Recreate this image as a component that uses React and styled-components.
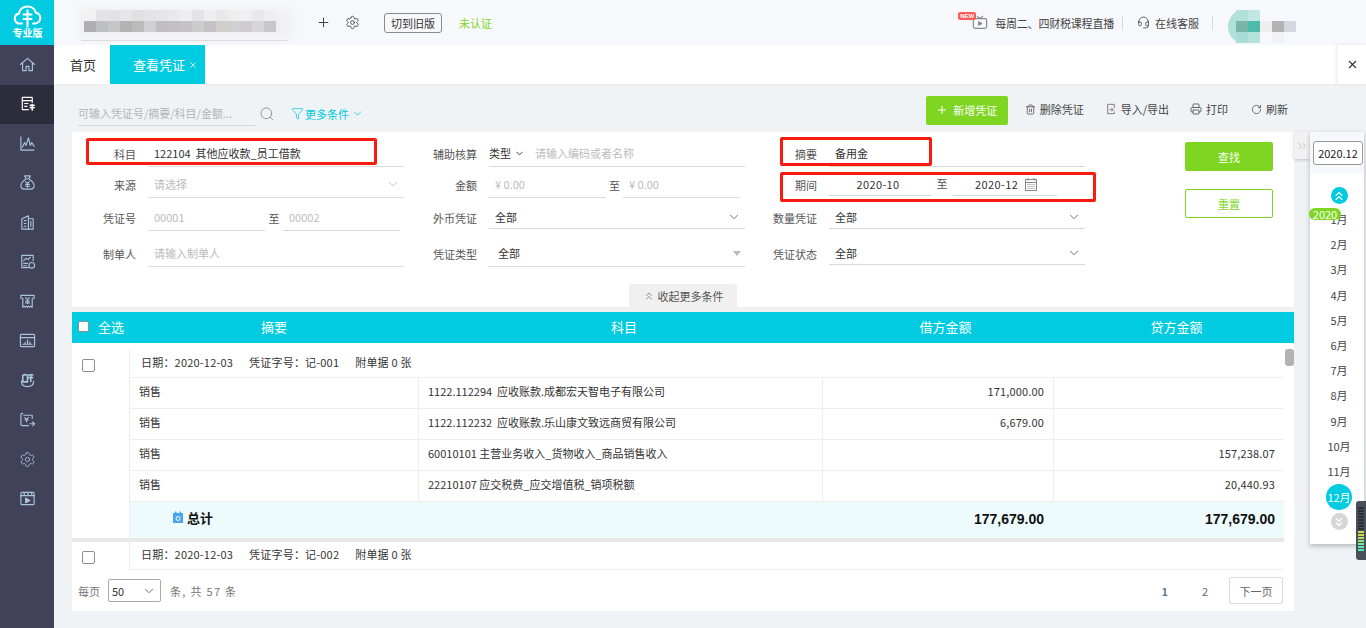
import React from 'react'
import styled, { createGlobalStyle } from 'styled-components'
import { Plus, Settings, Search, Filter, ChevronDown, ChevronsUp, ChevronsDown, ChevronsRight, X, Trash2, Printer, RotateCw, Headset } from 'lucide-react'

const GlobalStyle = createGlobalStyle`
  * { box-sizing: border-box; }
  html, body { margin: 0; padding: 0; overflow: hidden; }
  body {
    font-family: "Noto Sans CJK SC", "Liberation Sans", sans-serif;
    font-size: 11px;
    color: #333;
    background: #eff3f6;
  }
`

const CYAN = '#00cbe0'
const GREEN = '#7ed622'

const Page = styled.div`
  display: flex;
  width: 1366px;
  height: 628px;
  overflow: hidden;
`

const Sidebar = styled.nav`
  width: 54px;
  flex: none;
  background: #41425a;
`

const Logo = styled.div`
  height: 45px;
  background: ${CYAN};
  color: #fff;
  display: flex;
  flex-direction: column;
  align-items: center;
  padding: 5px 0 0 1px;
  font-size: 10px;
  font-weight: 700;
  line-height: 10px;
`

const SideItem = styled.div`
  height: 39.5px;
  padding-bottom: 1px;
  display: flex;
  align-items: center;
  justify-content: center;
  color: ${p => (p.$active ? '#fff' : '#a9c4dc')};
  background: ${p => (p.$active ? '#2b2e3a' : 'transparent')};
`

const Main = styled.div`
  flex: 1;
  min-width: 0;
  display: flex;
  flex-direction: column;
`

const TopBar = styled.header`
  height: 45px;
  flex: none;
  background: #f7f8fc;
  display: flex;
  align-items: center;
`

const Mosaic = styled.div`
  position: relative;
  display: grid;
  grid-template-columns: repeat(${p => p.$cols}, 12px);
  grid-auto-rows: ${p => p.$row}px;
  margin-left: ${p => p.$left || 0}px;
  margin-top: ${p => p.$top || 0}px;
`

const Cell = styled.i`
  display: block;
  background: ${p => p.$c};
`

const NameBlur = styled.div`
  position: relative;
  width: 222px;
  height: 36px;
  margin-left: 24px;
  display: flex;
  align-items: center;
  &::before {
    content: '';
    position: absolute;
    inset: 4px 6px 2px 2px;
    background: #f0f0f2;
    filter: blur(4px);
  }
  &::after {
    content: '';
    position: absolute;
    left: 3px;
    right: 12px;
    bottom: 0;
    height: 1px;
    background: #dcdcde;
  }
`

const TopIcon = styled.span`
  display: flex;
  margin-left: ${p => p.$left}px;
  color: #444;
`

const OldBtn = styled.button`
  margin-left: 24px;
  width: 58px;
  height: 20px;
  padding: 0;
  border: 1px solid #8a8a8a;
  border-radius: 3px;
  background: transparent;
  color: #333;
  font: inherit;
  line-height: 18px;
`

const Unverified = styled.span`
  margin-left: 17px;
  color: ${GREEN};
`

const TopRight = styled.div`
  margin-left: auto;
  display: flex;
  align-items: center;
  padding-right: 70px;
  color: #444;
`

const LiveIcon = styled.span`
  position: relative;
  display: flex;
  margin-right: 7px;
  color: #8a8a8a;
`

const NewBadge = styled.b`
  position: absolute;
  left: -14px;
  top: -3px;
  width: 18px;
  height: 8px;
  border-radius: 2px;
  background: #fb5a5a;
  color: #fff;
  font: 700 6px/8px "Liberation Sans", sans-serif;
  text-align: center;
`

const LiveText = styled.span`
  letter-spacing: -0.2px;
`

const ServiceText = styled.span`
  margin-left: 5px;
`

const VSep = styled.span`
  width: 1px;
  height: 14px;
  background: #d8d8d8;
  margin: 0 ${p => p.$right}px 0 ${p => p.$left}px;
`

const UserBlur = styled.div`
  position: relative;
  width: 68px;
  height: 33px;
  margin-top: 8px;
`

const UserBlob = styled.span`
  position: absolute;
  left: 0;
  top: 0;
  width: 30px;
  height: 33px;
  border-radius: 50% 0 0 50%;
  background: #b2e1da;
`

const TabBar = styled.div`
  height: 40px;
  flex: none;
  background: #fff;
  display: flex;
  border-bottom: 1px solid #eceef0;
`

const Tab = styled.div`
  width: ${p => p.$w}px;
  padding-left: ${p => p.$pad}px;
  display: flex;
  align-items: center;
  font-size: 13px;
  background: ${p => (p.$on ? CYAN : '#fff')};
  color: ${p => (p.$on ? '#fff' : '#333')};
  svg { margin-left: 3px; }
`

const TabClose = styled.div`
  margin-left: auto;
  width: 28px;
  display: flex;
  align-items: center;
  justify-content: center;
  box-shadow: -2px 0 4px rgba(0, 0, 0, 0.08);
  color: #333;
`

const Tools = styled.div`
  height: 47px;
  flex: none;
  display: flex;
  align-items: center;
  padding: 0 78px 0 24px;
`

const SearchBox = styled.div`
  width: 177px;
  height: 25px;
  margin-top: 10px;
  border-bottom: 1px solid #d5d8dc;
  color: #b5b5b5;
  line-height: 25px;
  white-space: nowrap;
`

const SearchBtn = styled.span`
  display: flex;
  margin: 10px 0 0 4px;
  color: #8a8f94;
`

const MoreLink = styled.span`
  display: flex;
  align-items: center;
  margin: 10px 0 0 16px;
  color: ${CYAN};
  svg:first-child { margin-right: 1px; }
  svg:last-child { margin-left: 2px; }
`

const ToolRight = styled.div`
  margin-left: auto;
  display: flex;
  align-items: center;
  margin-top: 3px;
`

const AddBtn = styled.button`
  width: 82px;
  height: 29px;
  border: 0;
  border-radius: 2px;
  background: ${GREEN};
  color: #fff;
  font: inherit;
  display: flex;
  align-items: center;
  justify-content: center;
  gap: 5px;
  padding: 0 0 1px;
`

const ToolLink = styled.span`
  display: flex;
  align-items: center;
  gap: 4px;
  margin-left: ${p => p.$left}px;
  padding-bottom: 2px;
  color: #444;
  svg { color: #666; }
`

const Body = styled.div`
  flex: 1;
  display: flex;
  min-height: 0;
  padding-left: 18px;
`

const Content = styled.section`
  width: 1222px;
  flex: none;
  height: 479px;
  background: #fff;
  display: flex;
  flex-direction: column;
`

const FormCard = styled.div`
  position: relative;
  height: 175px;
  flex: none;
  display: grid;
  grid-template-columns: 332px 341px 340px 188px;
  grid-template-rows: 35px 31px 33px 36px;
  align-items: end;
`

const Field = styled.div`
  display: flex;
  align-items: flex-end;
  margin-bottom: ${p => (p.$lift ? 2 : 0)}px;
`

const Label = styled.label`
  width: ${p => p.$w || 64}px;
  flex: none;
  height: ${p => p.$h || 26}px;
  line-height: ${p => p.$h || 26}px;
  text-align: right;
  margin-right: 12px;
  color: #555;
`

const Control = styled.div`
  flex: ${p => (p.$w ? 'none' : 1)};
  width: ${p => (p.$w ? `${p.$w}px` : 'auto')};
  height: ${p => p.$h || 27}px;
  display: flex;
  align-items: center;
  justify-content: ${p => p.$justify || 'flex-start'};
  padding-left: ${p => p.$pad ?? 6}px;
  padding-right: 4px;
  border-bottom: 1px solid #d9d9d9;
  color: ${p => (p.$muted ? '#bbb' : '#333')};
  white-space: pre;
  > svg { margin-left: auto; color: ${p => p.$arrow || '#555'}; flex: none; }
`

const ToWord = styled.span`
  flex: none;
  width: ${p => p.$w}px;
  height: 26px;
  line-height: 26px;
  text-align: center;
  color: #555;
`

const TypePick = styled.span`
  display: flex;
  align-items: center;
  color: #333;
  margin-right: 10px;
  svg { margin-left: 3px; }
`

const Hint = styled.span`
  color: #bbb;
`

const DateText = styled.span`
  letter-spacing: 0.4px;
`

const CalendarIcon = styled.span`
  display: flex;
  margin-left: 7px;
  color: #888;
`

const ButtonCol = styled.div`
  grid-column: 4;
  grid-row: 1 / 5;
  align-self: start;
  padding: 10px 0 0 100px;
  display: flex;
  flex-direction: column;
  gap: 18px;
`

const FindBtn = styled.button`
  width: 88px;
  height: 29px;
  border-radius: 2px;
  border: 1px solid ${GREEN};
  background: ${p => (p.$ghost ? '#fff' : GREEN)};
  color: ${p => (p.$ghost ? GREEN : '#fff')};
  font: inherit;
  padding: 0;
`

const Collapse = styled.div`
  position: absolute;
  left: 557px;
  bottom: 0;
  width: 108px;
  height: 23px;
  border-radius: 3px 3px 0 0;
  background: #f0f0f0;
  color: #555;
  display: flex;
  align-items: center;
  justify-content: center;
  gap: 3px;
`

const RedBox = styled.div`
  position: absolute;
  left: ${p => p.$x}px;
  top: ${p => p.$y}px;
  width: ${p => p.$w}px;
  height: ${p => p.$h}px;
  border: 3px solid #fb1a10;
  border-radius: 2px;
  pointer-events: none;
`

const Strip = styled.div`
  height: 5px;
  flex: none;
  background: #f0f0f0;
`

const TableHead = styled.div`
  height: 31px;
  flex: none;
  padding-bottom: 2px;
  background: ${CYAN};
  color: #fff;
  font-size: 13px;
  display: grid;
  grid-template-columns: 58px 288px 412px 231px 231px;
  align-items: center;
  text-align: center;
`

const SelectAll = styled.label`
  display: flex;
  align-items: center;
  gap: 9px;
  padding-left: 6px;
  white-space: nowrap;
`

const Check = styled.input.attrs({ type: 'checkbox' })`
  appearance: none;
  margin: 0;
  flex: none;
  width: ${p => p.$size}px;
  height: ${p => p.$size}px;
  background: #fff;
  border: 1px solid #8f8f8f;
  border-radius: 2px;
`

const TableBody = styled.div`
  height: 228px;
  flex: none;
  display: flex;
  overflow: hidden;
  padding-top: 7px;
`

const VoucherList = styled.div`
  width: 1212px;
  flex: none;
`

const Voucher = styled.div`
  display: flex;
  border-bottom: ${p => (p.$last ? 0 : '4px solid #e8e8e8')};
`

const CheckCol = styled.div`
  width: 57px;
  flex: none;
  padding: 9px 0 0 10px;
`

const VoucherBody = styled.div`
  flex: 1;
  border-left: 1px solid #eee;
`

const VoucherInfo = styled.div`
  height: 28px;
  display: flex;
  align-items: center;
  padding: 0 0 4px 11px;
  gap: 16px;
  border-bottom: 1px solid #eee;
  letter-spacing: 0.2px;
`

const Row = styled.div`
  display: grid;
  grid-template-columns: 289px 404px 231px 230px;
  height: ${p => (p.$total ? 36 : 31)}px;
  align-items: stretch;
  border-bottom: ${p => (p.$total ? 0 : '1px solid #eee')};
  background: ${p => (p.$total ? '#edfbfd' : '#fff')};
`

const Td = styled.div`
  display: flex;
  align-items: center;
  justify-content: ${p => (p.$right ? 'flex-end' : 'flex-start')};
  padding: 0 9px 4px;
  border-right: ${p => (p.$noBorder ? 0 : '1px solid #eee')};
  white-space: pre;
  letter-spacing: ${p => (p.$right ? '0.15px' : 0)};
`

const TotalLabel = styled.div`
  display: flex;
  align-items: center;
  gap: 3px;
  padding: 0 0 6px 42px;
  font-size: 13px;
  font-weight: 700;
  color: #111;
`

const TotalNum = styled(Td)`
  font: 700 14px "Liberation Sans", sans-serif;
  letter-spacing: 0;
  padding-bottom: 2px;
  padding-right: ${p => (p.$debit ? 10 : 9)}px;
  color: #111;
`

const ScrollTrack = styled.div`
  width: 10px;
  flex: none;
  padding: 0 0 0 1px;
`

const ScrollThumb = styled.div`
  height: 17px;
  margin-top: -1px;
  border-radius: 3px;
  background: #b5b2b2;
`

const Footer = styled.div`
  height: 40px;
  flex: none;
  display: flex;
  align-items: center;
  padding: 0 11px 1px 6px;
  color: #777;
`

const PageSize = styled.div`
  width: 53px;
  height: 23px;
  margin: 0 9px 0 8px;
  padding: 0 4px 0 3px;
  border: 1px solid #aaa;
  border-radius: 2px;
  color: #333;
  display: flex;
  align-items: center;
  justify-content: space-between;
`

const CountText = styled.span`
  letter-spacing: 1.3px;
`

const Pager = styled.div`
  margin-left: auto;
  display: flex;
  align-items: center;
  color: #5a6a7a;
`

const PageNum = styled.span`
  margin-right: ${p => p.$right}px;
  font-weight: ${p => (p.$on ? 700 : 400)};
  color: ${p => (p.$on ? '#5b7a8c' : '#5a6a7a')};
`

const NextBtn = styled.button`
  width: 54px;
  height: 27px;
  border: 1px solid #ddd;
  border-radius: 2px;
  background: #fff;
  color: #666;
  font: inherit;
  padding: 0;
`

const Rail = styled.aside`
  flex: none;
  width: 72px;
  height: 412px;
  position: relative;
  display: flex;
`

const RailToggle = styled.div`
  width: 16px;
  height: 27px;
  flex: none;
  background: #f2f2f2;
  box-shadow: 0 1px 3px rgba(0, 0, 0, 0.2);
  color: #b4b4b4;
  display: flex;
  align-items: center;
  justify-content: center;
`

const MonthPanel = styled.div`
  width: 54px;
  background: #fff;
  box-shadow: 0 2px 5px rgba(0, 0, 0, 0.25);
  display: flex;
  flex-direction: column;
`

const PeriodWrap = styled.div`
  height: 42px;
  flex: none;
  background: #f7f8fc;
  padding: 9px 0 0 3px;
`

const PeriodBox = styled.div`
  width: 50px;
  height: 24px;
  line-height: 22px;
  text-align: center;
  background: #fff;
  border: 1px solid #999;
  border-radius: 3px;
  color: #222;
`

const MonthColumn = styled.div`
  display: flex;
  flex-direction: column;
  align-items: center;
  padding-left: 4px;
`

const RoundBtn = styled.span`
  width: 17px;
  height: 17px;
  margin-top: ${p => p.$top}px;
  border-radius: 50%;
  background: ${p => (p.$grey ? '#d6d6d6' : CYAN)};
  color: #fff;
  display: flex;
  align-items: center;
  justify-content: center;
  flex: none;
`

const YearBadge = styled.span`
  position: absolute;
  left: 15px;
  top: 76px;
  width: 32px;
  height: 12px;
  border-radius: 6px;
  background: ${GREEN};
  color: #fff;
  line-height: 12px;
  text-align: center;
`

const MonthList = styled.div`
  margin-top: 3px;
  display: flex;
  flex-direction: column;
  align-items: center;
`

const Month = styled.span`
  height: 25.2px;
  line-height: 25.2px;
  text-align: center;
  color: #444;
`

const MonthOn = styled.span`
  width: 26px;
  height: 26px;
  line-height: 26px;
  border-radius: 50%;
  background: ${CYAN};
  color: #fff;
  text-align: center;
  white-space: nowrap;
`

const MeterWidget = styled.div`
  position: absolute;
  right: 0;
  top: 501px;
  width: 10px;
  height: 59px;
  border-radius: 3px 0 0 3px;
  background: #4b5058;
  padding: 6px 2px 2px;
  display: flex;
  flex-direction: column;
  gap: 1px;
`

const MeterBar = styled.i`
  display: block;
  height: 2px;
  flex: none;
  background: ${p => p.$c};
`

const Glyph = ({ size = 17, width = 1.2, children }) => (
  <svg width={size} height={size} viewBox="0 0 18 18" fill="none" stroke="currentColor" strokeWidth={width} strokeLinecap="round" strokeLinejoin="round">
    {children}
  </svg>
)

const LogoCloud = () => (
  <svg width="29" height="23" viewBox="0 0 29 23" fill="none" stroke="#fff" strokeWidth="2.1" strokeLinecap="round" strokeLinejoin="round">
    <path d="M9 18.500H6.500a5 5 0 0 1-.6-9.900C6.800 4.300 10.300 1.500 14.500 1.500c3.900 0 7.200 2.400 8.300 6.100a5.500 5.500 0 0 1-.6 10.900H20" />
    <path d="M14.500 5.500v16" />
    <path d="M10.500 9.500h8M10.500 14h8" />
  </svg>
)

const CalendarGlyph = () => (
  <svg width="12" height="13" viewBox="0 0 12 13" fill="none" stroke="currentColor" strokeWidth="1">
    <rect x="0.500" y="1.500" width="11" height="11" />
    <path d="M0.500 4.500h11M3 0v2.500M9 0v2.500" />
    <path d="M2.500 6.500h7M2.500 8.500h7M2.500 10.500h7" strokeDasharray="1 1" />
  </svg>
)

const sideIcons = [
  <Glyph><path d="M1.500 9L9 2.500 16.500 9" /><path d="M3.800 7.500v8h3.700v-4.500h3v4.500h3.700v-8" /></Glyph>,
  <Glyph><path d="M14 8V2.500H3.500v13H10" /><path d="M3.500 6h10.500M6 9h3.500M6 12h2.500" /><path d="M12 11h4M12 13.500h4M14 10v6" strokeWidth="1.700" /></Glyph>,
  <Glyph><path d="M2 2v14h14" /><path d="M3.500 13l2.500-5 1.500 3L10 3l2 8 1.500-3 2.500 4" /></Glyph>,
  <Glyph><path d="M6 2h6l-1.500 3h-3z" /><path d="M7 5.500C4 7.500 2 10 2 12.500 2 15 3.500 16 6 16h6c2.500 0 4-1 4-3.500 0-2.500-2-5-5-7" /><path d="M7 8l2 2 2-2M9 10v4M7 11h4M7 13h4" /></Glyph>,
  <Glyph><path d="M3 5l7-3v14H3z" /><path d="M10 5h5v11h-5" /><path d="M5.500 7h2M5.500 10h2M5.500 13h2M12.500 8v5" /></Glyph>,
  <Glyph><path d="M15 8V2.500H3v13h7" /><path d="M5 11h4M5 13.500h3M5 8l2.500-2.500 2 1.500 2.500-2.500" /><circle cx="13.500" cy="13" r="3" /></Glyph>,
  <Glyph><path d="M2 2.500h14v3h-2V15l-1.500-1-1.500 1-1-1-1 1-1-1-1 1-1.500-1L4 15V5.500H2z" /><path d="M7 5l2 2 2-2M9 7v4M7 8.500h4M7 10.500h4" /></Glyph>,
  <Glyph><rect x="1.500" y="2.500" width="15" height="13" rx="1" /><path d="M1.500 6h15M4 13h10M6.500 13v-2M9 13V8.500M11.500 13v-2.500" /></Glyph>,
  <Glyph><path d="M2.500 9.500c0 4 3 6 6.500 6s6.500-2 6.500-6" /><path d="M4 3.500c2-1 3.500-1 5 0v7H4zM10.500 3h4M10.500 6h4M12.500 3v7" strokeWidth="1.700" /></Glyph>,
  <Glyph><path d="M14 8V4.500H5M4 2.500h-.5A1.500 1.500 0 0 0 2 4v10a1.500 1.500 0 0 0 1.500 1.500H10" /><path d="M6 7l2 2 2-2M8 9v2.500M6.500 9.500h3" /><path d="M11.500 13.500h5M14.500 11.500l2 2-2 2" /></Glyph>,
  <Settings size={17} strokeWidth={1.2} />,
  <Glyph><rect x="2" y="2.500" width="14" height="13" rx="1" /><path d="M2 6h14M5 2.500L6 6M9 2.500L10 6M13 2.500L14 6" /><path d="M7 8.500l4.500 2.500L7 13.500z" fill="currentColor" /></Glyph>,
]

const nameTop = ['#f2f2f3', '#e4e4e6', '#e2e2e4', '#e6e6e8', '#e0e0e3', '#e4e4e6', '#e6e6e8', '#e9e9eb', '#eeeef0', '#e4e4e7', '#eeeef0', '#e9e9ec', '#eeeeef', '#f0f0f2', '#e9e9ec', '#eeeef0']
const nameBottom = ['#b2afb2', '#bcc0c1', '#c6c6c8', '#b4b3b4', '#bcbbbc', '#cfd0d6', '#c0bec1', '#c2c0c3', '#c4c2c6', '#cccccd', '#c4c2c6', '#d0cfca', '#d0d0d4', '#ceccd0', '#d6d5d7', '#c8c6ca']
const userCells = [
  '#b2e1da', '#c0e8e2', 'transparent', 'transparent', 'transparent',
  '#7ab5a8', '#4cbba9', '#eeeeef', '#b3b2b4', '#d3d7df',
  '#a9dcd5', '#b5e2dc', 'transparent', '#f2f2f6', 'transparent',
]

const rows = [
  ['1122.112294  应收账款.成都宏天智电子有限公司', '171,000.00', ''],
  ['1122.112232  应收账款.乐山康文致远商贸有限公司', '6,679.00', ''],
  ['60010101 主营业务收入_货物收入_商品销售收入', '', '157,238.07'],
  ['22210107 应交税费_应交增值税_销项税额', '', '20,440.93'],
]

const months = ['1月', '2月', '3月', '4月', '5月', '6月', '7月', '8月', '9月', '10月', '11月']

const meter = ['#2c3036', '#2c3036', '#2c3036', '#2c3036', '#2c3036', '#2c3036', '#2c3036', '#2c3036', '#c8d84a', '#c8d84a', '#b4dc5a', '#96e07a', '#7ae69a', '#60e8b0', '#50e8c0']

function VoucherInfoRow({ no }) {
  return (
    <VoucherInfo>
      <span>日期：2020-12-03</span>
      <span>凭证字号：记-{no}</span>
      <span>附单据 0 张</span>
    </VoucherInfo>
  )
}

export default function App() {
  return (
    <>
      <GlobalStyle />
      <Page>
        <Sidebar>
          <Logo>
            <LogoCloud />
            专业版
          </Logo>
          {sideIcons.map((icon, i) => (
            <SideItem key={i} $active={i === 1}>{icon}</SideItem>
          ))}
        </Sidebar>
        <Main>
          <TopBar>
            <NameBlur>
              <Mosaic $cols={16} $row={11} $left={6} $top={-3}>
                {nameTop.map((c, i) => <Cell key={i} $c={c} />)}
                {nameBottom.map((c, i) => <Cell key={i} $c={c} />)}
              </Mosaic>
            </NameBlur>
            <TopIcon $left={16}><Plus size={15} strokeWidth={1.6} /></TopIcon>
            <TopIcon $left={14}><Settings size={15} strokeWidth={1.4} /></TopIcon>
            <OldBtn>切到旧版</OldBtn>
            <Unverified>未认证</Unverified>
            <TopRight>
              <LiveIcon>
                <NewBadge>NEW</NewBadge>
                <Glyph size={16} width={1.3}>
                  <rect x="1.500" y="4" width="15" height="11" rx="2" />
                  <path d="M6 1.500L9 4l3-2.500" />
                  <path d="M7.500 7.500l3.500 2-3.500 2z" fill="currentColor" />
                </Glyph>
              </LiveIcon>
              <LiveText>每周二、四财税课程直播</LiveText>
              <VSep $left={8} $right={14} />
              <TopIcon $left={0}><Headset size={13} strokeWidth={1.5} /></TopIcon>
              <ServiceText>在线客服</ServiceText>
              <VSep $left={13} $right={15} />
              <UserBlur>
                <UserBlob />
                <Mosaic $cols={5} $row={11} $left={8}>
                  {userCells.map((c, i) => <Cell key={i} $c={c} />)}
                </Mosaic>
              </UserBlur>
            </TopRight>
          </TopBar>
          <TabBar>
            <Tab $w={56} $pad={16}>首页</Tab>
            <Tab $w={95} $pad={23} $on>查看凭证<X size={10} /></Tab>
            <TabClose><X size={13} /></TabClose>
          </TabBar>
          <Tools>
            <SearchBox>可输入凭证号/摘要/科目/金额...</SearchBox>
            <SearchBtn><Search size={16} strokeWidth={1.4} /></SearchBtn>
            <MoreLink>
              <Filter size={13} strokeWidth={1.4} />
              更多条件
              <ChevronDown size={13} strokeWidth={1.4} />
            </MoreLink>
            <ToolRight>
              <AddBtn><Plus size={12} strokeWidth={2} />新增凭证</AddBtn>
              <ToolLink $left={17}><Trash2 size={11} />删除凭证</ToolLink>
              <ToolLink $left={21}>
                <Glyph size={12}><path d="M14 7V2H4v14h10v-3" /><path d="M7 10h5M10 8l2 2-2 2" /></Glyph>
                导入/导出
              </ToolLink>
              <ToolLink $left={21}><Printer size={12} />打印</ToolLink>
              <ToolLink $left={23}><RotateCw size={11} />刷新</ToolLink>
            </ToolRight>
          </Tools>
          <Body>
            <Content>
              <FormCard>
                <Field>
                  <Label>科目</Label>
                  <Control>122104  其他应收款_员工借款</Control>
                </Field>
                <Field>
                  <Label $w={73}>辅助核算</Label>
                  <Control $pad={0}>
                    <TypePick>类型<ChevronDown size={11} /></TypePick>
                    <Hint>请输入编码或者名称</Hint>
                  </Control>
                </Field>
                <Field>
                  <Label $w={72}>摘要</Label>
                  <Control>备用金</Control>
                </Field>
                <ButtonCol>
                  <FindBtn>查找</FindBtn>
                  <FindBtn $ghost>重置</FindBtn>
                </ButtonCol>

                <Field>
                  <Label>来源</Label>
                  <Control $muted $arrow="#aaa">请选择<ChevronDown size={14} strokeWidth={1.2} /></Control>
                </Field>
                <Field>
                  <Label $w={73}>金额</Label>
                  <Control $w={117} $muted>¥ 0.00</Control>
                  <ToWord $w={17}>至</ToWord>
                  <Control $w={117} $muted>¥ 0.00</Control>
                </Field>
                <Field $lift>
                  <Label $w={72} $h={22}>期间</Label>
                  <Control $w={102} $h={23} $pad={0} $justify="center"><DateText>2020-10</DateText></Control>
                  <ToWord $w={22}>至</ToWord>
                  <Control $w={104} $h={23} $pad={22}>
                    <DateText>2020-12</DateText>
                    <CalendarIcon><CalendarGlyph /></CalendarIcon>
                  </Control>
                </Field>

                <Field>
                  <Label>凭证号</Label>
                  <Control $w={117} $muted>00001</Control>
                  <ToWord $w={18}>至</ToWord>
                  <Control $w={117} $muted>00002</Control>
                </Field>
                <Field $lift>
                  <Label $w={73} $h={22}>外币凭证</Label>
                  <Control $h={23}>全部<ChevronDown size={14} strokeWidth={1.4} /></Control>
                </Field>
                <Field $lift>
                  <Label $w={72} $h={22}>数量凭证</Label>
                  <Control $h={23}>全部<ChevronDown size={14} strokeWidth={1.4} /></Control>
                </Field>

                <Field>
                  <Label>制单人</Label>
                  <Control $muted>请输入制单人</Control>
                </Field>
                <Field>
                  <Label $w={73}>凭证类型</Label>
                  <Control $pad={9}>
                    全部
                    <svg width="8" height="5" viewBox="0 0 8 5"><path d="M0 0h8L4 5z" fill="#bbb" /></svg>
                  </Control>
                </Field>
                <Field $lift>
                  <Label $w={72} $h={22}>凭证状态</Label>
                  <Control $h={23}>全部<ChevronDown size={14} strokeWidth={1.4} /></Control>
                </Field>

                <Collapse><ChevronsUp size={12} strokeWidth={1.3} />收起更多条件</Collapse>
                <RedBox $x={14} $y={6} $w={291} $h={27} />
                <RedBox $x={708} $y={5} $w={152} $h={29} />
                <RedBox $x={708} $y={40} $w={316} $h={30} />
              </FormCard>
              <Strip />
              <TableHead>
                <SelectAll><Check $size={11} />全选</SelectAll>
                <span>摘要</span>
                <span>科目</span>
                <span>借方金额</span>
                <span>贷方金额</span>
              </TableHead>
              <TableBody>
                <VoucherList>
                  <Voucher>
                    <CheckCol><Check $size={13} /></CheckCol>
                    <VoucherBody>
                      <VoucherInfoRow no="001" />
                      {rows.map(r => (
                        <Row key={r[0]}>
                          <Td>销售</Td>
                          <Td>{r[0]}</Td>
                          <Td $right>{r[1]}</Td>
                          <Td $right $noBorder>{r[2]}</Td>
                        </Row>
                      ))}
                      <Row $total>
                        <TotalLabel>
                          <svg width="12" height="12" viewBox="0 0 12 12">
                            <path d="M1 2h10v10H1z" fill="#4aa3f0" />
                            <path d="M3 0.500h1.500V3H3zM7.500 0.500H9V3H7.500z" fill="#4aa3f0" />
                            <circle cx="6" cy="7.500" r="2" fill="none" stroke="#fff" />
                          </svg>
                          总计
                        </TotalLabel>
                        <span />
                        <TotalNum $right $debit $noBorder>177,679.00</TotalNum>
                        <TotalNum $right $noBorder>177,679.00</TotalNum>
                      </Row>
                    </VoucherBody>
                  </Voucher>
                  <Voucher $last>
                    <CheckCol><Check $size={13} /></CheckCol>
                    <VoucherBody>
                      <VoucherInfoRow no="002" />
                    </VoucherBody>
                  </Voucher>
                </VoucherList>
                <ScrollTrack><ScrollThumb /></ScrollTrack>
              </TableBody>
              <Footer>
                每页
                <PageSize>50<ChevronDown size={14} strokeWidth={1.2} /></PageSize>
                <CountText>条, 共 57 条</CountText>
                <Pager>
                  <PageNum $on $right={34}>1</PageNum>
                  <PageNum $right={21}>2</PageNum>
                  <NextBtn>下一页</NextBtn>
                </Pager>
              </Footer>
            </Content>
            <Rail>
              <RailToggle><ChevronsRight size={14} strokeWidth={1.2} /></RailToggle>
              <MonthPanel>
                <PeriodWrap><PeriodBox>2020.12</PeriodBox></PeriodWrap>
                <MonthColumn>
                  <RoundBtn $top={13}><ChevronsUp size={14} /></RoundBtn>
                  <MonthList>
                    {months.map(m => <Month key={m}>{m}</Month>)}
                    <MonthOn>12月</MonthOn>
                  </MonthList>
                  <RoundBtn $grey $top={3}><ChevronsDown size={14} /></RoundBtn>
                </MonthColumn>
              </MonthPanel>
              <YearBadge>2020</YearBadge>
            </Rail>
          </Body>
        </Main>
        <MeterWidget>
          {meter.map((c, i) => <MeterBar key={i} $c={c} />)}
        </MeterWidget>
      </Page>
    </>
  )
}
